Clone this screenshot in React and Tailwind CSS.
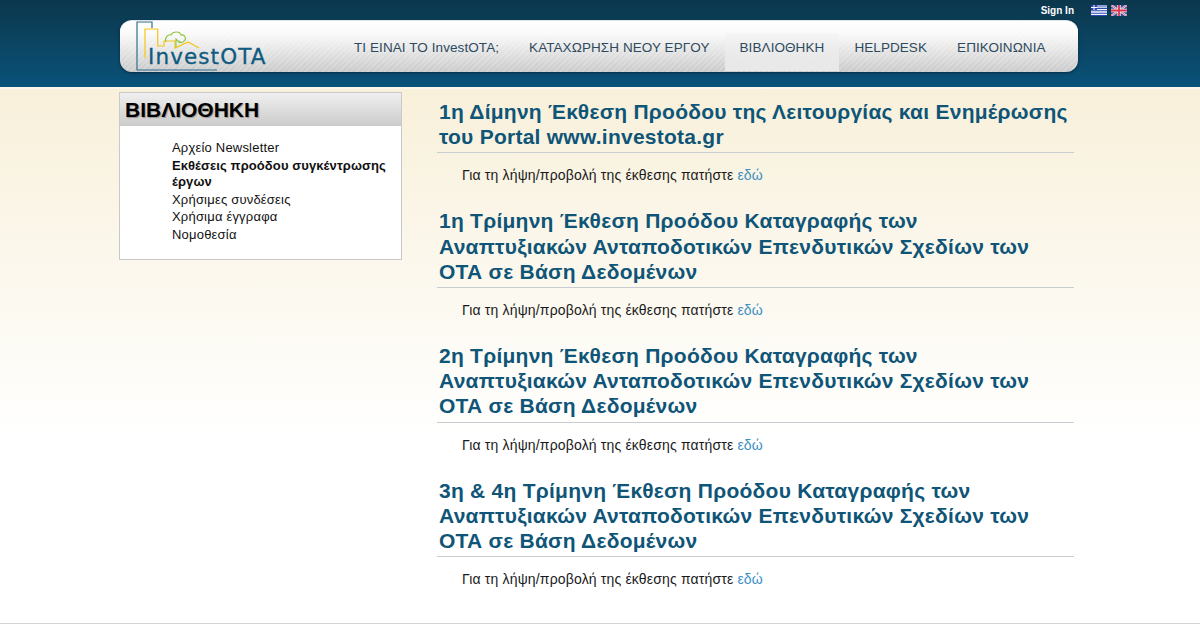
import { Fragment } from 'react';

const navItems = ['ΤΙ ΕΙΝΑΙ ΤΟ InvestOTA;', 'ΚΑΤΑΧΩΡΗΣΗ ΝΕΟΥ ΕΡΓΟΥ', 'ΒΙΒΛΙΟΘΗΚΗ', 'HELPDESK', 'ΕΠΙΚΟΙΝΩΝΙΑ'];

const sideLinks = [
  { label: 'Αρχείο Newsletter' },
  { label: 'Εκθέσεις προόδου συγκέντρωσης έργων', active: true },
  { label: 'Χρήσιμες συνδέσεις' },
  { label: 'Χρήσιμα έγγραφα' },
  { label: 'Νομοθεσία' },
];

const reports = [
  ['1η Δίμηνη Έκθεση Προόδου της Λειτουργίας και Ενημέρωσης', 'του Portal www.investota.gr'],
  ['1η Τρίμηνη Έκθεση Προόδου Καταγραφής των', 'Αναπτυξιακών Ανταποδοτικών Επενδυτικών Σχεδίων των', 'ΟΤΑ σε Βάση Δεδομένων'],
  ['2η Τρίμηνη Έκθεση Προόδου Καταγραφής των', 'Αναπτυξιακών Ανταποδοτικών Επενδυτικών Σχεδίων των', 'ΟΤΑ σε Βάση Δεδομένων'],
  ['3η & 4η Τρίμηνη Έκθεση Προόδου Καταγραφής των', 'Αναπτυξιακών Ανταποδοτικών Επενδυτικών Σχεδίων των', 'ΟΤΑ σε Βάση Δεδομένων'],
];

const Logo = () => (
  <svg width="140" height="51" viewBox="0 0 140 51" className="block">
    <path d="M17 7V1H2V49H82" fill="none" stroke="#2f6f91" strokeWidth="1.2" />
    <path d="M10 37V8H22.7V25H29V20H40V27L53 21L64 27" fill="none" stroke="#f5c518" strokeWidth="1.2" />
    <path d="M31 21C29 17 33 13 36 14C38 10 45 10 46 14C50 13 52 18 49 20C47 23 45 21 44 20" fill="none" stroke="#8dc63f" strokeWidth="1.1" />
    <path d="M41 26V18L45 22" fill="none" stroke="#8dc63f" strokeWidth="1.1" />
    <text x="13" y="43" fontFamily="'DejaVu Sans', sans-serif" fontSize="21.5" letterSpacing="1.1" fill="#0f5a80" stroke="#0f5a80" strokeWidth="0.3">InvestOTA</text>
  </svg>
);

const GreekFlag = () => (
  <svg width="16" height="11" viewBox="0 0 16 11" className="block">
    <rect width="16" height="11" fill="#f4f6fb" />
    <path d="M0 1h16M0 3.4h16M0 5.8h16M0 8.2h16M0 10.5h16" stroke="#2a48b0" strokeWidth="1.1" />
    <rect width="6" height="5" fill="#2a48b0" />
    <path d="M3 0v5M0 2.5h6" stroke="#fff" strokeWidth="1" />
  </svg>
);

const UkFlag = () => (
  <svg width="16" height="11" viewBox="0 0 16 11" className="block">
    <rect width="16" height="11" fill="#3b4f9e" />
    <path d="M0 0l16 11M16 0L0 11" stroke="#f3e6ea" strokeWidth="2" />
    <path d="M0 0l16 11M16 0L0 11" stroke="#d9364f" strokeWidth="0.7" />
    <path d="M8 0v11M0 5.5h16" stroke="#f3e6ea" strokeWidth="3.4" />
    <path d="M8 0v11M0 5.5h16" stroke="#d9364f" strokeWidth="1.8" />
  </svg>
);

export default function App() {
  return (
    <div className="h-[624px] overflow-hidden border-b border-[#d4d4d4] bg-white font-['Liberation_Sans',Arial,sans-serif]">
      <header className="h-[87px] bg-gradient-to-b from-[#0b374c] to-[#09527a]">
        <div className="flex h-[20px] items-center justify-end pr-[73px]">
          <a className="mr-[17px] text-[10px] font-bold text-white">Sign In</a>
          <div className="flex gap-1">
            <GreekFlag />
            <UkFlag />
          </div>
        </div>
        <div className="mx-auto flex h-[52px] w-[958px] translate-x-[-1px] items-end rounded-[12px] border-t border-[#dfe6e9] bg-[linear-gradient(to_bottom,#ffffff_0%,rgba(255,255,255,0.9)_25%,rgba(255,255,255,0)_100%),repeating-linear-gradient(135deg,#c9c9c9_0px,#c9c9c9_2px,#d2d2d2_2px,#d2d2d2_4px)] shadow-[0_1px_3px_rgba(0,0,0,0.45)]">
          <div className="ml-[15px] w-[204px] self-start">
            <Logo />
          </div>
          <nav className="mb-[1px] flex h-[38px] items-stretch text-[13.5px] tracking-[0.08px] text-[#2e4a5e]">
            {navItems.map((item) => (
              <a
                key={item}
                className={`flex items-center px-[15px] pb-[8px] ${item === 'ΒΙΒΛΙΟΘΗΚΗ' ? 'bg-gradient-to-b from-[#f3f3f3]/60 to-[#e9e9e9]' : ''}`}
              >
                {item}
              </a>
            ))}
          </nav>
        </div>
      </header>

      <div className="h-[537px] border-t-2 border-[#fbf7ea] bg-[linear-gradient(to_bottom,#f8f0da_0px,#ffffff_350px)]">
        <div className="mx-auto flex w-[958px] translate-x-[-1px] items-start pt-[3px]">
          <aside className="-ml-px h-[168px] w-[283px] border border-[#c9c9c9] bg-white">
            <h2 className="flex h-[33px] items-center bg-gradient-to-b from-[#f0f0f0] to-[#cbcbcb] pl-[5px] text-[21px] font-bold text-black [text-shadow:1px_1px_1px_rgba(0,0,0,0.3)]">
              ΒΙΒΛΙΟΘΗΚΗ
            </h2>
            <ul className="pt-[14px] pl-[52px] pr-[8px] text-[13px] leading-[16px] tracking-[0.2px] text-[#111]">
              {sideLinks.map((link) => (
                <li key={link.label} className={`mb-[1.75px] ${link.active ? 'font-bold tracking-[0.1px]' : ''}`}>
                  {link.label}
                </li>
              ))}
            </ul>
          </aside>

          <main className="ml-[35px] w-[637px] pt-[7px]">
            {reports.map((lines, i) => (
              <section key={i} className="mb-[25px]">
                <h3 className="border-b border-[#c7cdd0] px-[2px] pb-[3px] text-[21px] font-bold leading-[25.2px] tracking-[0.25px] text-[#0f5578]">
                  {lines.map((line, j) => (
                    <Fragment key={j}>
                      {line}
                      {j < lines.length - 1 && <br />}
                    </Fragment>
                  ))}
                </h3>
                <p className="pt-[14px] pl-[25px] text-[14px] leading-[16px] tracking-[0.165px] text-[#1a1a1a]">
                  Για τη λήψη/προβολή της έκθεσης πατήστε <a className="text-[#3d8fc4]">εδώ</a>
                </p>
              </section>
            ))}
          </main>
        </div>
      </div>
    </div>
  );
}
